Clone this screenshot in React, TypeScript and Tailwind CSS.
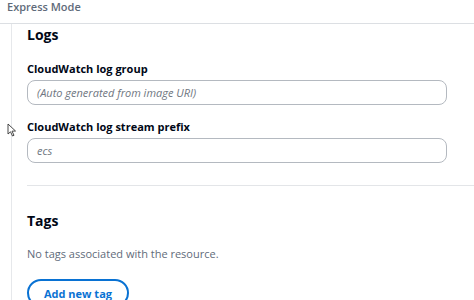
import React from 'react';

const Field: React.FC<{ label: string; placeholder: string }> = ({ label, placeholder }) => (
  <div className="flex flex-col">
    <label className="text-[11px] font-bold leading-[16px] text-[#000716]">{label}</label>
    <div className="mt-[3px] h-[25px] rounded-[8px] border border-[#b4b9c0] flex items-center px-[9px]">
      <span className="text-[11px] italic leading-[15px] text-[#6f7681]">{placeholder}</span>
    </div>
  </div>
);

const App: React.FC = () => {
  return (
    <div className="w-[474px] h-[300px] overflow-hidden bg-white relative" style={{ fontFamily: '"Open Sans", "Noto Sans", sans-serif' }}>
      <div className="h-[24px] border-b border-[#dcdfe3] px-[7px] text-[11px] font-semibold leading-[14px] text-[#5f6b7a]">
        Express Mode
      </div>

      <div className="ml-[11px] border-l border-[#e6e8eb] pl-[15px] h-[276px]">
        <div className="pr-[27px]">
          <h2 className="pt-[1px] text-[14px] font-bold leading-[20px] text-[#000716]">Logs</h2>
          <div className="mt-[16px] flex flex-col gap-[14px]">
            <Field label="CloudWatch log group" placeholder="(Auto generated from image URI)" />
            <Field label="CloudWatch log stream prefix" placeholder="ecs" />
          </div>
        </div>

        <div className="mt-[22px] border-t border-[#e3e5e8]" />

        <h2 className="mt-[25px] text-[14px] font-bold leading-[20px] text-[#000716]">Tags</h2>
        <p className="mt-[15px] text-[11px] leading-[16px] text-[#5f6b7a]">No tags associated with the resource.</p>
        <button className="mt-[17px] h-[28px] w-[102px] rounded-full border-2 border-[#0972d3] text-[11px] font-bold text-[#0972d3] leading-[15px]">
          Add new tag
        </button>
      </div>

      {/* mouse pointer */}
      <svg className="absolute left-[7px] top-[123px]" width="10" height="14" viewBox="0 0 10 14">
        <path d="M1 1 L1 11 L3.5 8.8 L5.5 13 L7 12.3 L5 8.2 L8.5 8 Z" fill="#fff" stroke="#333" strokeWidth="0.9" strokeLinejoin="round" />
      </svg>
    </div>
  );
};

export default App;
